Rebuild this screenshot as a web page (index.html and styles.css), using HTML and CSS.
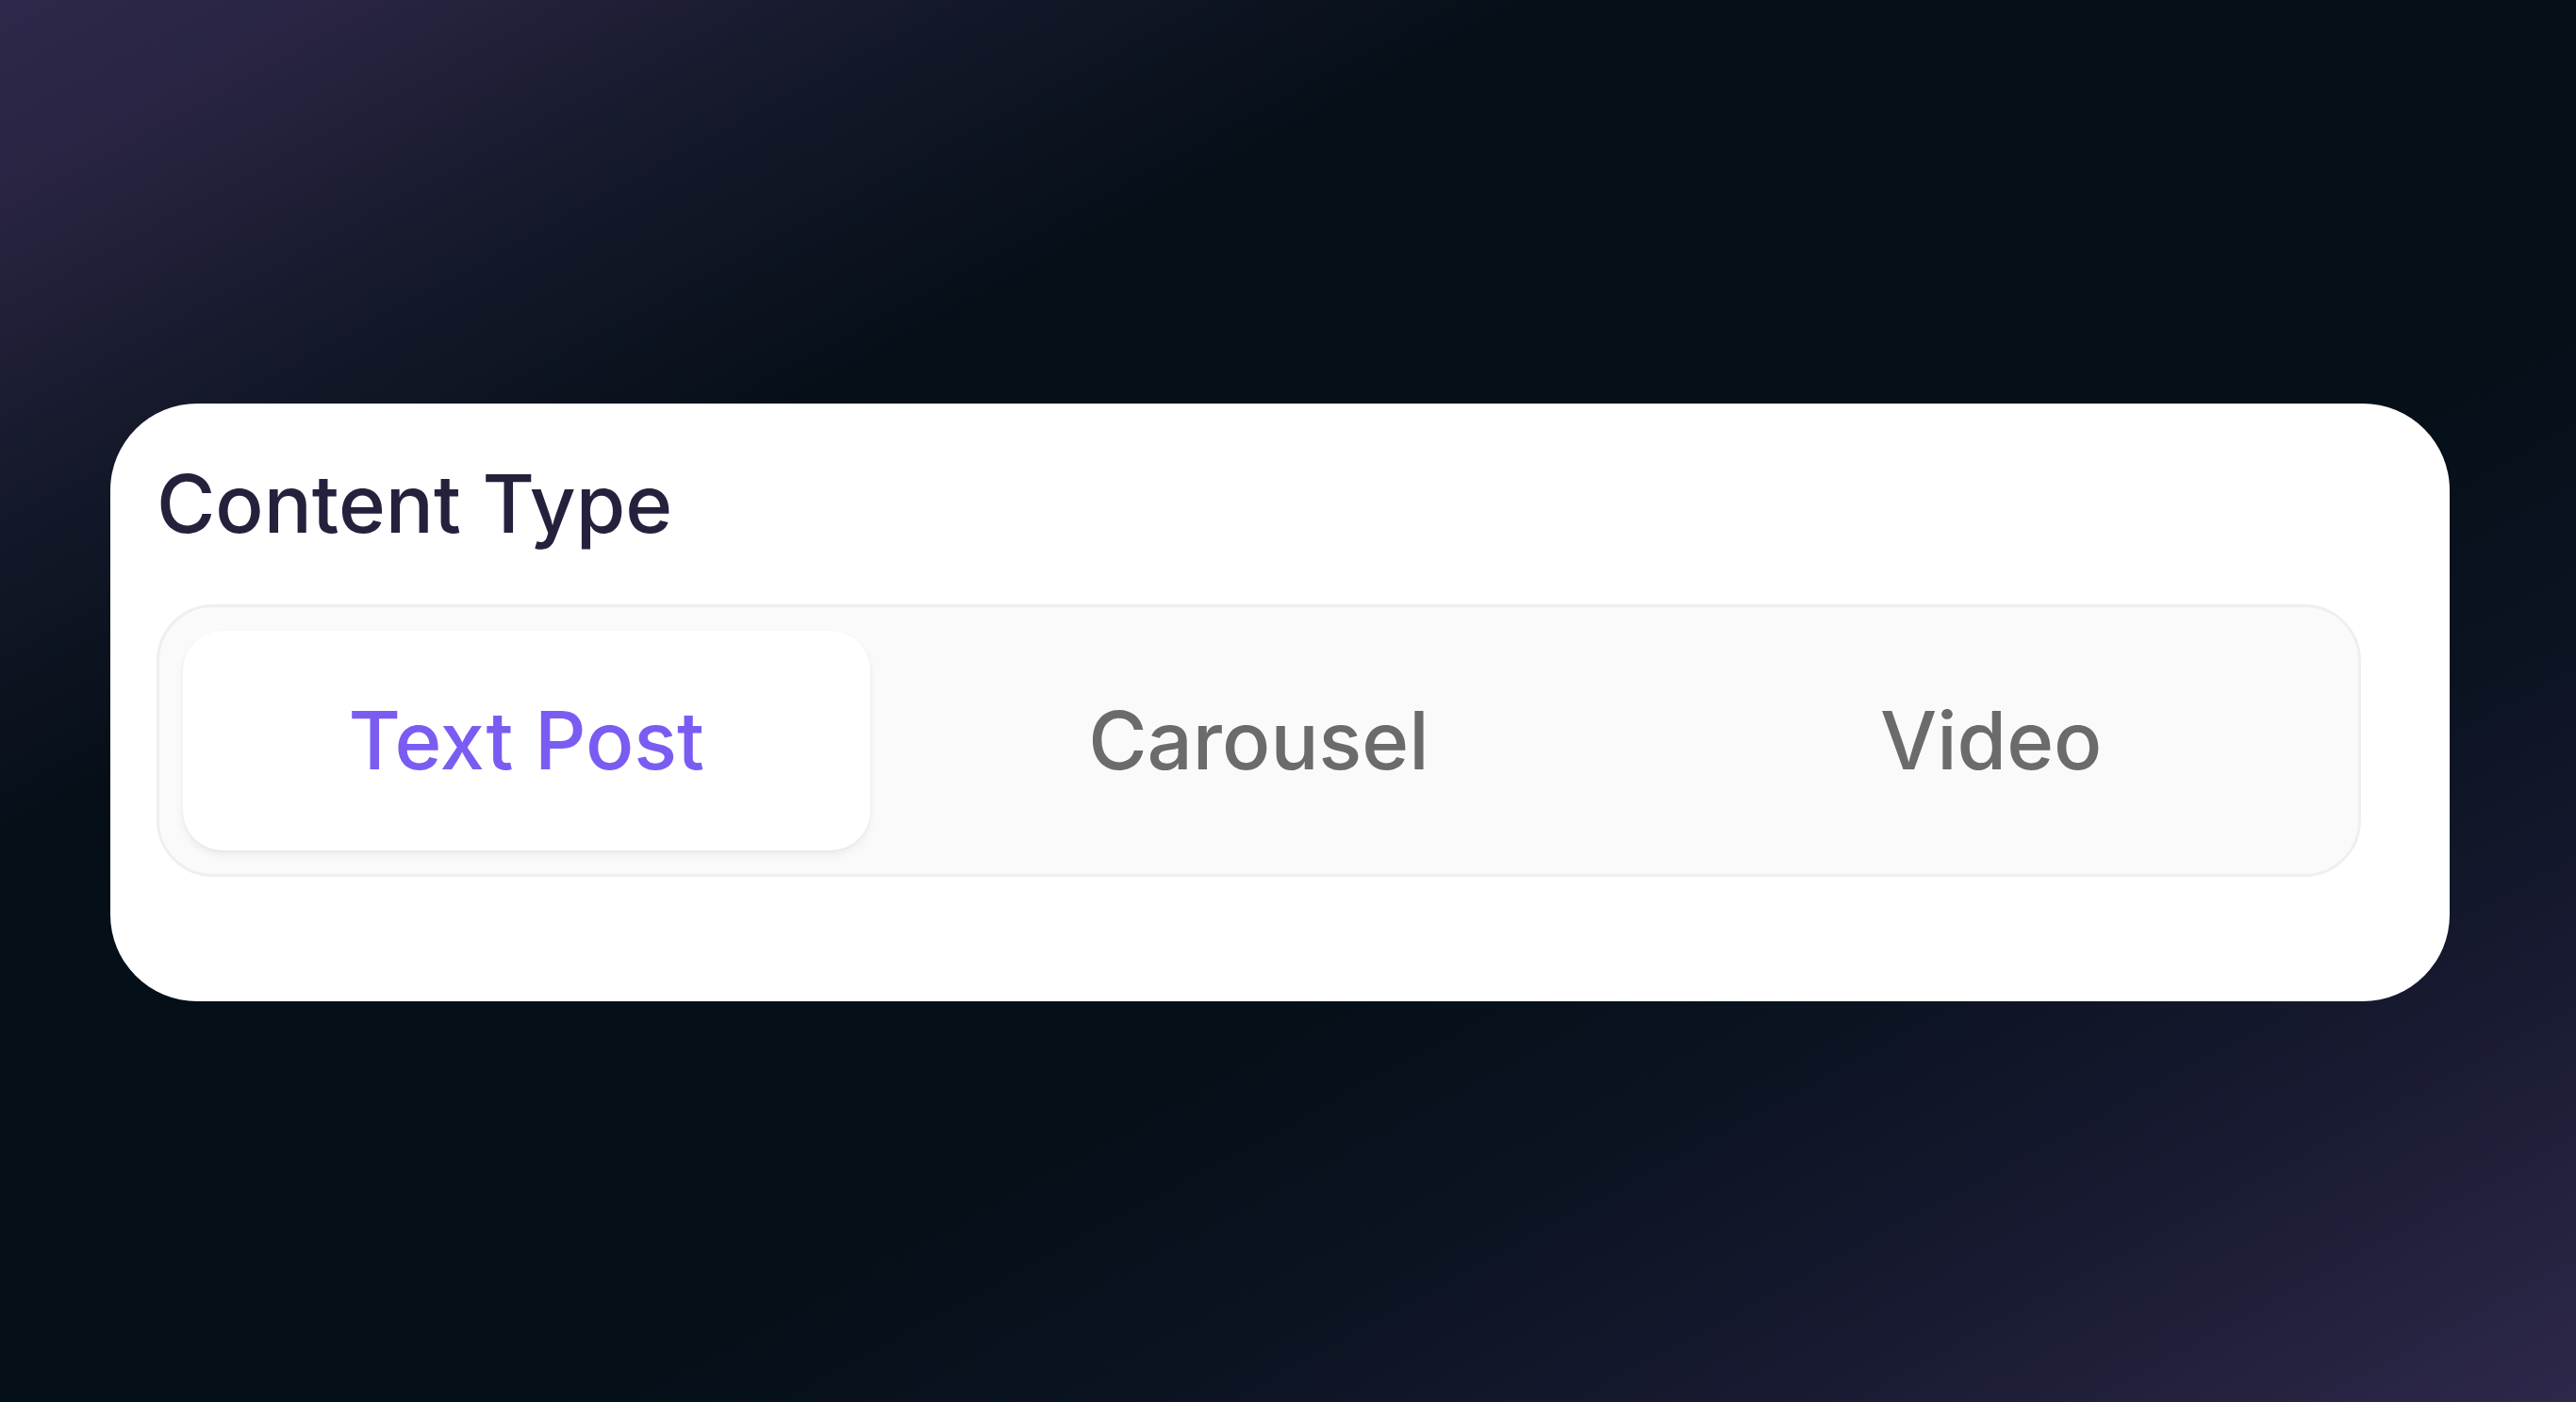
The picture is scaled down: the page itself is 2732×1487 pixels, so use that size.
FILE: index.html
```html
<!DOCTYPE html>
<html lang="en">
<head>
<meta charset="utf-8">
<title>Content Type</title>
<link rel="stylesheet" href="styles.css">
</head>
<body>
  <main class="stage">
    <section class="card">
      <h2 class="card-title">Content Type</h2>
      <div class="segmented" role="tablist">
        <button class="segment is-active" role="tab" aria-selected="true">Text Post</button>
        <button class="segment" role="tab" aria-selected="false">Carousel</button>
        <button class="segment" role="tab" aria-selected="false">Video</button>
      </div>
    </section>
  </main>
</body>
</html>
```

FILE: styles.css
```css
html, body {
  margin: 0;
  padding: 0;
  height: 100%;
}

body {
  background: linear-gradient(to bottom right,
    #2e284a 0%,
    #282442 7%,
    #161a2c 17%,
    #060f18 30%,
    #040f17 40%,
    #040f17 60%,
    #0b1321 72%,
    #181a31 84%,
    #2e284a 100%);
  font-family: Inter, "Noto Sans", "Liberation Sans", sans-serif;
  overflow: hidden;
}

.stage {
  padding: 428px 134px 0 117px;
}

.card {
  background: #ffffff;
  border-radius: 92px;
  padding: 55px 94px 132px 49px;
}

.card-title {
  margin: 0 0 55px 0;
  font-size: 85px;
  font-weight: 500;
  line-height: 103px;
  color: #25213d;
  letter-spacing: 0;
}

.segmented {
  display: grid;
  grid-template-columns: repeat(3, 1fr);
  gap: 48px;
  padding: 25px;
  background: #fafafa;
  border: 3px solid #efefef;
  border-radius: 60px;
}

.segment {
  font-family: inherit;
  font-size: 85px;
  font-weight: 500;
  line-height: 103px;
  color: #6b6b6b;
  background: transparent;
  border: none;
  border-radius: 42px;
  padding: 65px 0;
  text-align: center;
  cursor: pointer;
}

.segment.is-active {
  background: #ffffff;
  color: #7b5cf2;
  box-shadow: 0 5px 10px rgba(0, 0, 0, 0.06), 0 1px 3px rgba(0, 0, 0, 0.04);
}
```
